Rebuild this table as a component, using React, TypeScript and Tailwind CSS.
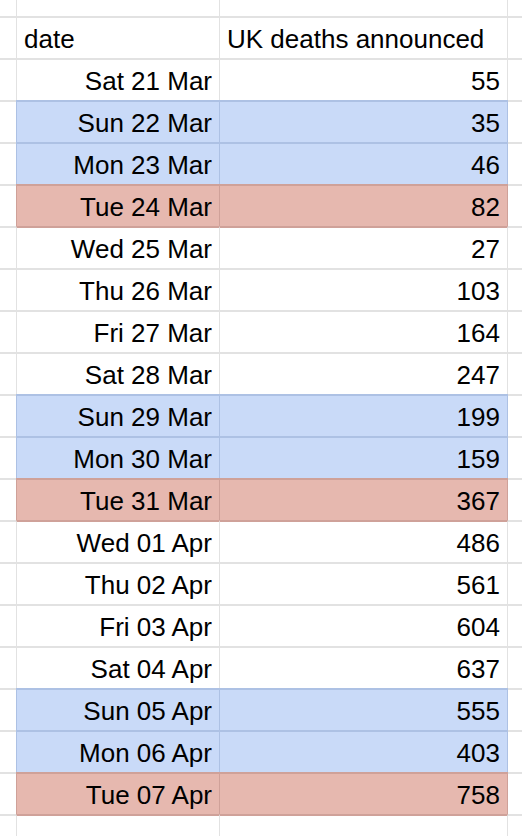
const rows: { date: string; n: number; tone: 'none' | 'blue' | 'red' }[] = [
  { date: 'Sat 21 Mar', n: 55, tone: 'none' },
  { date: 'Sun 22 Mar', n: 35, tone: 'blue' },
  { date: 'Mon 23 Mar', n: 46, tone: 'blue' },
  { date: 'Tue 24 Mar', n: 82, tone: 'red' },
  { date: 'Wed 25 Mar', n: 27, tone: 'none' },
  { date: 'Thu 26 Mar', n: 103, tone: 'none' },
  { date: 'Fri 27 Mar', n: 164, tone: 'none' },
  { date: 'Sat 28 Mar', n: 247, tone: 'none' },
  { date: 'Sun 29 Mar', n: 199, tone: 'blue' },
  { date: 'Mon 30 Mar', n: 159, tone: 'blue' },
  { date: 'Tue 31 Mar', n: 367, tone: 'red' },
  { date: 'Wed 01 Apr', n: 486, tone: 'none' },
  { date: 'Thu 02 Apr', n: 561, tone: 'none' },
  { date: 'Fri 03 Apr', n: 604, tone: 'none' },
  { date: 'Sat 04 Apr', n: 637, tone: 'none' },
  { date: 'Sun 05 Apr', n: 555, tone: 'blue' },
  { date: 'Mon 06 Apr', n: 403, tone: 'blue' },
  { date: 'Tue 07 Apr', n: 758, tone: 'red' },
]

type Tone = 'none' | 'blue' | 'red'

// cell fill + side lines for a coloured row
const fill: Record<Tone, string> = {
  none: 'bg-white border-[#e2e2e2]',
  blue: 'bg-[#c9daf8] border-[#adc1e4]',
  red: 'bg-[#e6b8af] border-[#cfa199]',
}

// top line colour: a coloured row (or the row right under one) tints it
function topLine(tone: Tone, prev: Tone) {
  const t = tone !== 'none' ? tone : prev
  if (t === 'blue') return 'border-t-[#adc1e4]'
  if (t === 'red') return 'border-t-[#cfa199]'
  return 'border-t-[#e2e2e2]'
}

function Row({ a, b, tone = 'none', prev = 'none', header = false }: { a?: string; b?: string | number; tone?: Tone; prev?: Tone; header?: boolean }) {
  const top = topLine(tone, prev)
  const align = header ? 'justify-start pl-[7px]' : 'justify-end pr-[7px]'
  return (
    <div className="grid h-[42px] grid-cols-[16px_204px_288px_1fr]">
      <div className="border-t-2 border-t-[#e2e2e2]" />
      <div className={`flex border-x border-t-2 ${fill[tone]} ${top} ${align}`}>
        <span className="pt-[1px] leading-[41px]">{a}</span>
      </div>
      <div className={`flex border-r border-t-2 ${fill[tone]} ${top} ${align}`}>
        <span className="pt-[1px] leading-[41px]">{b}</span>
      </div>
      <div className="border-t-2 border-t-[#e2e2e2]" />
    </div>
  )
}

export default function App() {
  return (
    <div className="h-[836px] w-[522px] overflow-hidden bg-white text-[26px] text-black font-['Liberation_Sans',Arial,sans-serif]">
      <div className="grid h-[16px] grid-cols-[16px_204px_288px_1fr]">
        <div />
        <div className="border-x border-[#e2e2e2]" />
        <div className="border-r border-[#e2e2e2]" />
        <div />
      </div>
      <Row a="date" b="UK deaths announced" header />
      {rows.map((r, i) => (
        <Row key={r.date} a={r.date} b={r.n} tone={r.tone} prev={i > 0 ? rows[i - 1].tone : 'none'} />
      ))}
      <Row prev="red" />
    </div>
  )
}
